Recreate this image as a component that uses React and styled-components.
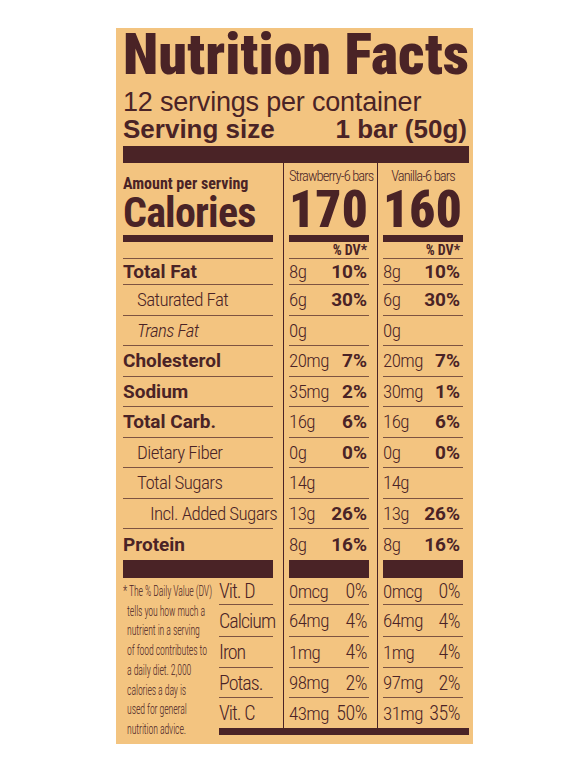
import React from "react";
import styled, { createGlobalStyle } from "styled-components";

const INK = "#4a2326";
const LINE = "rgba(74, 35, 38, 0.7)";
const PAPER = "#f3c480";
const COND = "'Roboto Condensed', 'Liberation Sans Narrow', 'Liberation Sans', sans-serif";
const BOLD = "Roboto, 'Liberation Sans', sans-serif";
const SANS = "'Liberation Sans', Arial, sans-serif";
const COLS = "150px 16px 80px 14px 80px";
const MCOLS = "54px 16px 80px 14px 80px";

const Global = createGlobalStyle`
  html, body { margin: 0; padding: 0; background: #ffffff; }
  body { font-family: ${COND}; color: ${INK}; }
`;

const Page = styled.main`
  padding: 28px 0 0 116px;
`;

const Label = styled.section`
  width: 357px;
  box-sizing: border-box;
  background: ${PAPER};
  padding: 1px 4px 4px 7px;
  color: ${INK};
`;

const Title = styled.h1`
  margin: 0;
  font-family: ${COND};
  font-weight: 900;
  font-size: 58px;
  line-height: 50px;
  letter-spacing: 0;
  white-space: nowrap;
`;

const Servings = styled.div`
  margin-top: 9px;
  font-family: ${SANS};
  font-size: 27px;
  line-height: 28px;
  letter-spacing: -0.2px;
  white-space: nowrap;
`;

const ServingSize = styled.div`
  display: flex;
  justify-content: space-between;
  padding-right: 2px;
  font-family: ${SANS};
  font-weight: 700;
  font-size: 26px;
  line-height: 26px;
  white-space: nowrap;
`;

const TopBar = styled.div`
  margin-top: 4px;
  height: 17px;
  background: ${INK};
`;

const Grid = styled.div`
  display: grid;
  grid-template-columns: ${(p) => p.$cols || COLS};
  height: ${(p) => p.$h}px;
`;

const Gutter = styled.div`
  background: linear-gradient(
    to right,
    transparent ${(p) => p.$at}px,
    ${INK} ${(p) => p.$at}px,
    ${INK} ${(p) => p.$at + 1}px,
    transparent ${(p) => p.$at + 1}px
  );
`;

const Bar = styled.div`
  background: ${INK};
`;

const LeftHead = styled.div`
  display: flex;
  flex-direction: column;
  padding-top: 13px;
`;

const AmountPer = styled.div`
  font-weight: 700;
  font-size: 16px;
  line-height: 16px;
  white-space: nowrap;
`;

const Calories = styled.div`
  font-weight: 700;
  font-size: 42px;
  line-height: 42px;
  letter-spacing: -0.8px;
  white-space: nowrap;
`;

const ColHead = styled.div`
  display: flex;
  flex-direction: column;
  padding-top: 6px;
  min-width: 0;
`;

const Variety = styled.div`
  font-weight: 300;
  font-size: 14.5px;
  line-height: 16px;
  letter-spacing: -0.9px;
  text-align: center;
  white-space: nowrap;
`;

const CalNum = styled.div`
  margin-top: 3px;
  font-weight: 900;
  font-size: 51px;
  line-height: 44px;
  letter-spacing: 0.3px;
`;

const Cell = styled.div`
  display: flex;
  align-items: center;
  justify-content: ${(p) => p.$justify || "space-between"};
  box-sizing: border-box;
  padding-left: ${(p) => p.$indent || 0}px;
  padding-right: ${(p) => p.$right || 0}px;
  border-bottom: ${(p) => (p.$line ? `1px solid ${LINE}` : "none")};
  white-space: nowrap;
`;

const DV = styled.span`
  font-weight: 700;
  font-size: 14px;
  line-height: 14px;
`;

const Name = styled.span`
  font-family: ${(p) => (p.$bold ? BOLD : COND)};
  font-weight: ${(p) => (p.$bold ? 700 : 300)};
  font-style: ${(p) => (p.$italic ? "italic" : "normal")};
  font-size: 19px;
  letter-spacing: ${(p) => (p.$bold ? "0" : "-0.6px")};
`;

const Amount = styled.span`
  font-weight: 300;
  font-size: 19px;
  letter-spacing: -0.6px;
`;

const Pct = styled.span`
  font-family: ${(p) => (p.$light ? COND : BOLD)};
  font-weight: ${(p) => (p.$light ? 300 : 700)};
  font-size: ${(p) => (p.$light ? 20 : 19)}px;
  letter-spacing: ${(p) => (p.$light ? "-0.5px" : "0")};
`;

const Micro = styled.div`
  display: flex;
  gap: 6px;
`;

const Footnote = styled.p`
  margin: 0;
  padding-top: 4px;
  width: 90px;
  flex: none;
`;

const NoteText = styled.span`
  display: block;
  width: 130px;
  font-weight: 300;
  font-size: 14.5px;
  line-height: 19.7px;
  letter-spacing: -0.2px;
  white-space: nowrap;
  transform: scaleX(0.68);
  transform-origin: left top;
`;

const NoteLine = styled.span`
  display: block;
  padding-left: ${(p) => (p.$first ? 0 : 6)}px;
`;

const MicroRight = styled.div`
  width: 250px;
  display: flex;
  flex-direction: column;
`;

const MicroName = styled.span`
  font-weight: 300;
  font-size: 20px;
  letter-spacing: -1px;
`;

const BottomBar = styled.div`
  height: 7px;
  background: ${INK};
`;

const nutrients = [
  { name: "Total Fat", bold: true, h: 26, a: ["8g", "10%"], b: ["8g", "10%"] },
  { name: "Saturated Fat", indent: 14, a: ["6g", "30%"], b: ["6g", "30%"] },
  { name: "Trans Fat", indent: 14, italic: true, a: ["0g"], b: ["0g"] },
  { name: "Cholesterol", bold: true, a: ["20mg", "7%"], b: ["20mg", "7%"] },
  { name: "Sodium", bold: true, a: ["35mg", "2%"], b: ["30mg", "1%"] },
  { name: "Total Carb.", bold: true, a: ["16g", "6%"], b: ["16g", "6%"] },
  { name: "Dietary Fiber", indent: 14, a: ["0g", "0%"], b: ["0g", "0%"] },
  { name: "Total Sugars", indent: 14, a: ["14g"], b: ["14g"] },
  { name: "Incl. Added Sugars", indent: 27, a: ["13g", "26%"], b: ["13g", "26%"] },
  { name: "Protein", bold: true, h: 31, last: true, a: ["8g", "16%"], b: ["8g", "16%"] },
];

const micros = [
  { name: "Vit. D", h: 27, a: ["0mcg", "0%"], b: ["0mcg", "0%"] },
  { name: "Calcium", h: 32, a: ["64mg", "4%"], b: ["64mg", "4%"] },
  { name: "Iron", h: 31, a: ["1mg", "4%"], b: ["1mg", "4%"] },
  { name: "Potas.", h: 30, a: ["98mg", "2%"], b: ["97mg", "2%"] },
  { name: "Vit. C", h: 30, last: true, a: ["43mg", "50%"], b: ["31mg", "35%"] },
];

const noteLines = [
  "* The % Daily Value (DV)",
  "tells you how much a",
  "nutrient in a serving",
  "of food contributes to",
  "a daily diet. 2,000",
  "calories a day is",
  "used for general",
  "nutrition advice.",
];

function Gutters({ children }) {
  const [l, c2, c3] = children;
  return (
    <>
      {l}
      <Gutter $at={10} />
      {c2}
      <Gutter $at={8} />
      {c3}
    </>
  );
}

export default function App() {
  return (
    <Page>
      <Global />
      <Label>
        <Title>Nutrition Facts</Title>
        <Servings>12 servings per container</Servings>
        <ServingSize>
          <span>Serving size</span>
          <span>1 bar (50g)</span>
        </ServingSize>
        <TopBar />

        <Grid $h={72}>
          <Gutters>
            <LeftHead>
              <AmountPer>Amount per serving</AmountPer>
              <Calories>Calories</Calories>
            </LeftHead>
            <ColHead>
              <Variety>Strawberry-6 bars</Variety>
              <CalNum>170</CalNum>
            </ColHead>
            <ColHead>
              <Variety>Vanilla-6 bars</Variety>
              <CalNum>160</CalNum>
            </ColHead>
          </Gutters>
        </Grid>

        <Grid $h={7}>
          <Gutters>
            <Bar />
            <Bar />
            <Bar />
          </Gutters>
        </Grid>

        <Grid $h={17}>
          <Gutters>
            <Cell $line />
            <Cell $line $justify="flex-end" $right={2}>
              <DV>% DV*</DV>
            </Cell>
            <Cell $line $justify="flex-end" $right={3}>
              <DV>% DV*</DV>
            </Cell>
          </Gutters>
        </Grid>

        {nutrients.map((n) => (
          <Grid key={n.name} $h={n.h || 30.5}>
            <Gutters>
              <Cell $line={!n.last} $indent={n.indent}>
                <Name $bold={n.bold} $italic={n.italic}>
                  {n.name}
                </Name>
              </Cell>
              <Cell $line={!n.last} $right={2}>
                <Amount>{n.a[0]}</Amount>
                {n.a[1] && <Pct>{n.a[1]}</Pct>}
              </Cell>
              <Cell $line={!n.last} $right={3}>
                <Amount>{n.b[0]}</Amount>
                {n.b[1] && <Pct>{n.b[1]}</Pct>}
              </Cell>
            </Gutters>
          </Grid>
        ))}

        <Grid $h={18}>
          <Gutters>
            <Bar />
            <Bar />
            <Bar />
          </Gutters>
        </Grid>

        <Micro>
          <Footnote>
            <NoteText>
              {noteLines.map((t, i) => (
                <NoteLine key={t} $first={i === 0}>
                  {t}
                </NoteLine>
              ))}
            </NoteText>
          </Footnote>
          <MicroRight>
            {micros.map((m) => (
              <Grid key={m.name} $cols={MCOLS} $h={m.h}>
                <Gutters>
                  <Cell $line={!m.last}>
                    <MicroName>{m.name}</MicroName>
                  </Cell>
                  <Cell $line={!m.last} $right={2}>
                    <Amount>{m.a[0]}</Amount>
                    <Pct $light>{m.a[1]}</Pct>
                  </Cell>
                  <Cell $line={!m.last} $right={3}>
                    <Amount>{m.b[0]}</Amount>
                    <Pct $light>{m.b[1]}</Pct>
                  </Cell>
                </Gutters>
              </Grid>
            ))}
            <BottomBar />
          </MicroRight>
        </Micro>
      </Label>
    </Page>
  );
}
